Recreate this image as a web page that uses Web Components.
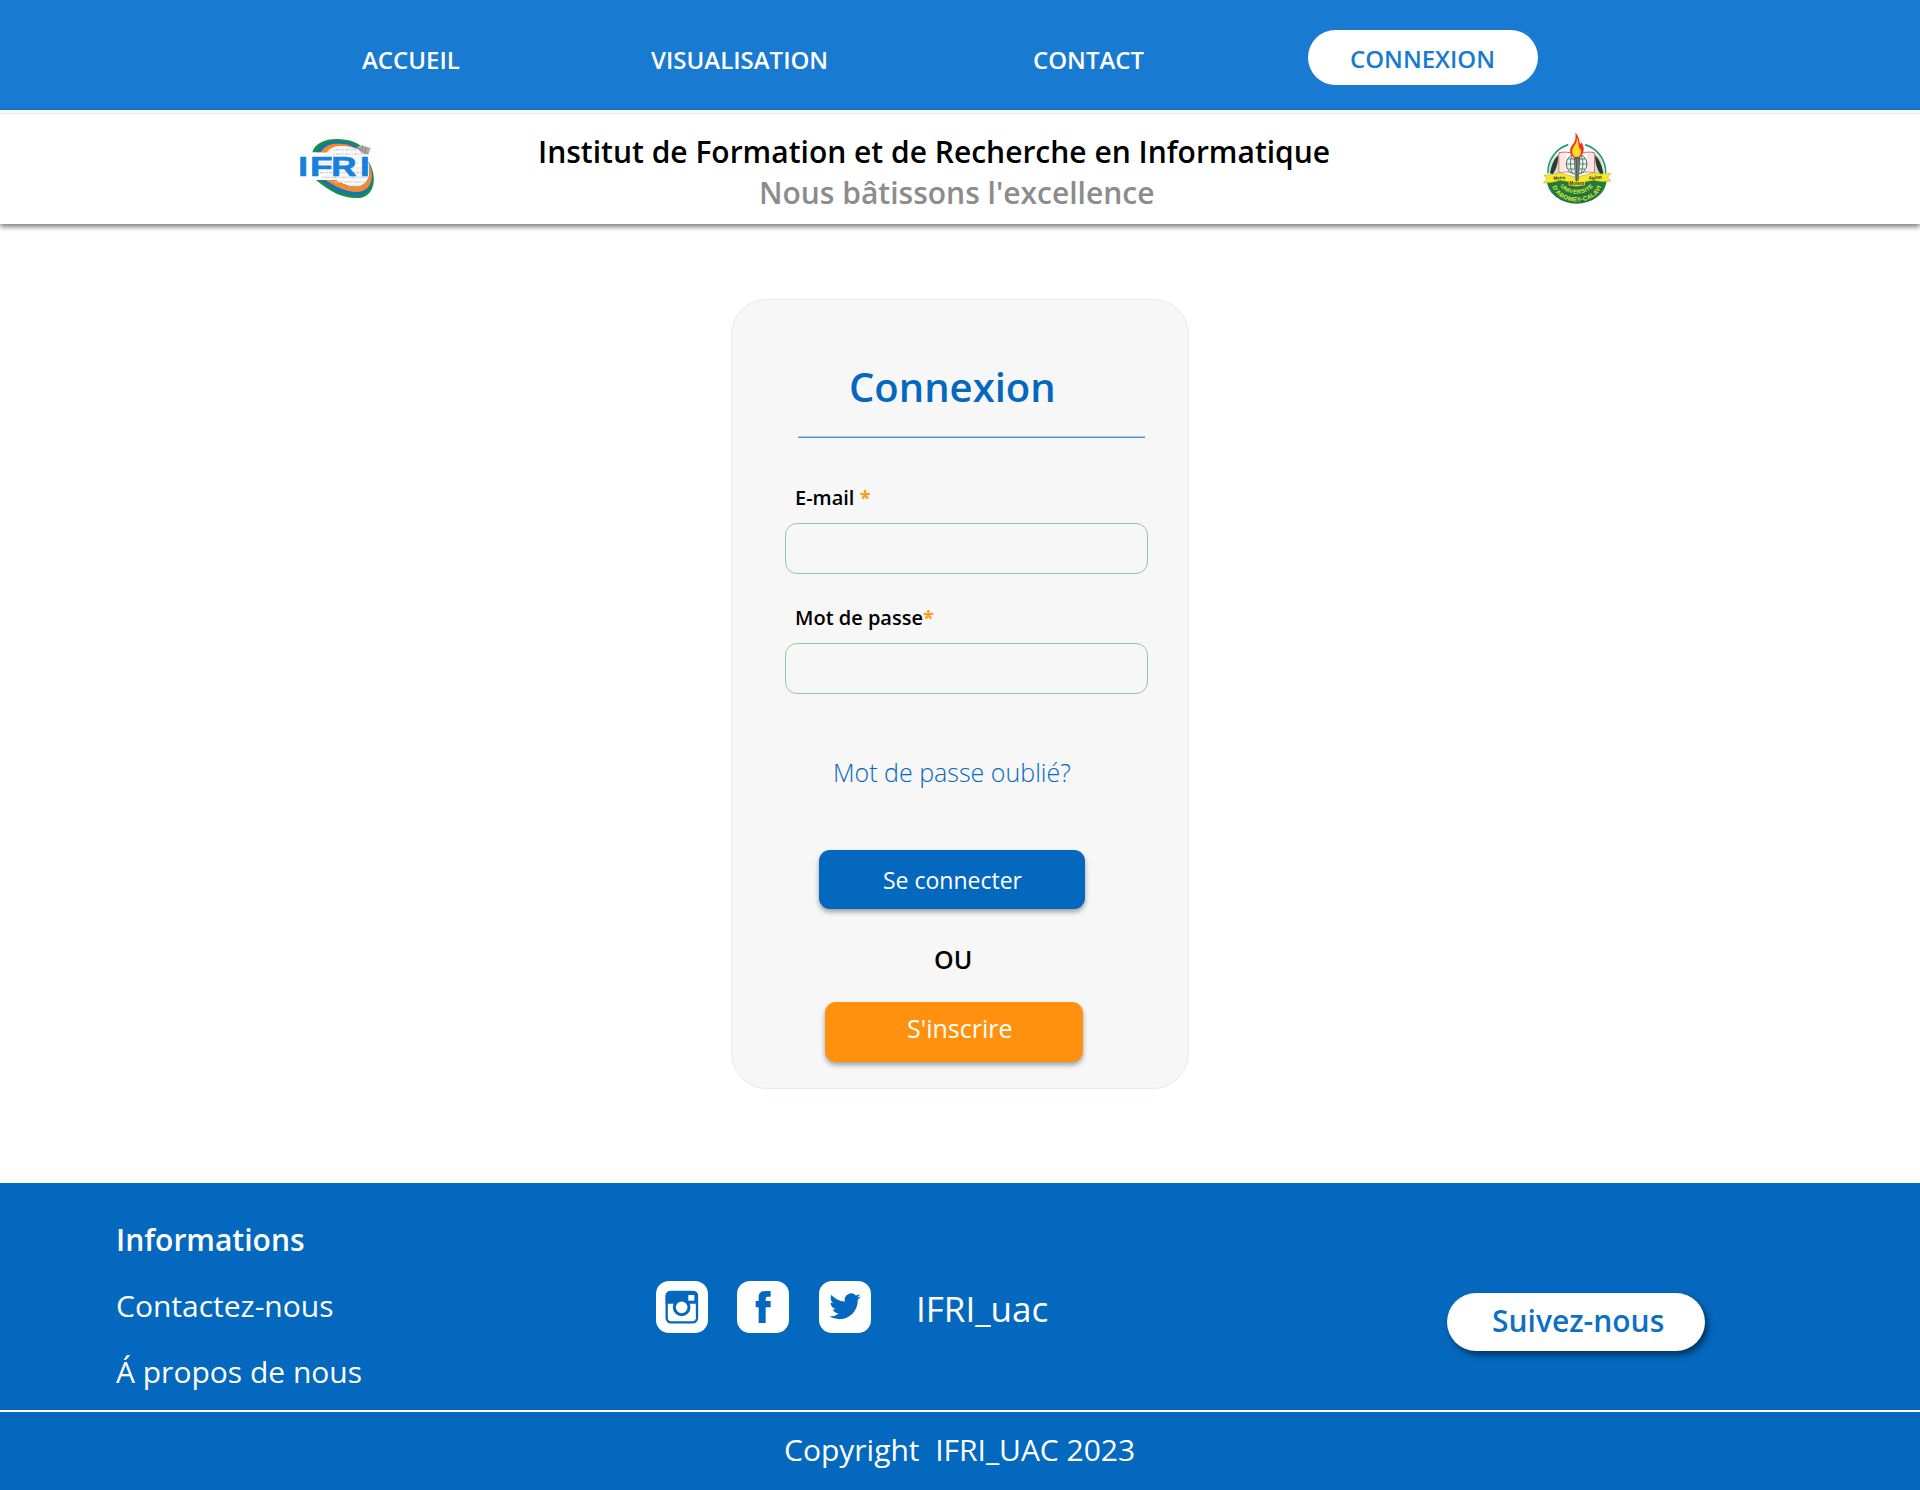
<!DOCTYPE html>
<html lang="fr">
<head>
<meta charset="utf-8">
<title>IFRI - Connexion</title>
<style>
  body { margin: 0; background: #fff; font-family: "Open Sans", sans-serif; color: #000; }
</style>
</head>
<body>
<ifri-page></ifri-page>
<script>
const define = (name, html) => {
  const template = document.createElement('template');
  template.innerHTML = html;
  customElements.define(name, class extends HTMLElement {
    constructor() {
      super();
      this.attachShadow({ mode: 'open' }).append(template.content.cloneNode(true));
    }
  });
};

define('nav-link', `
<style>
  :host { display: block; padding-top: 43px; font-weight: 600; font-size: 24px; line-height: 34px; color: #fff; white-space: nowrap; }
</style><slot></slot>`);

define('nav-pill', `
<style>
  :host { display: block; box-sizing: border-box; width: 230px; height: 55px; margin-top: 30px; padding: 12px 0 0 42px;
    border-radius: 27.5px; background: #fff; color: #187ad1; font-weight: 600; font-size: 24px; line-height: 34px; }
</style><slot></slot>`);

define('site-nav', `
<style>
  :host { display: grid; grid-template-columns: 289px 382px 275px 230px; align-items: start; box-sizing: border-box;
    height: 110px; padding-left: 362px; background: #187ad1; }
</style>
<nav-link>ACCUEIL</nav-link>
<nav-link>VISUALISATION</nav-link>
<nav-link>CONTACT</nav-link>
<nav-pill>CONNEXION</nav-pill>`);

define('ifri-logo', `
<style>
  :host { display: block; width: 120px; height: 90px; }
  svg { display: block; }
  text { font-family: "Liberation Sans", Arial, sans-serif; font-weight: bold; }
</style>
<svg width="120" height="90" viewBox="0 0 360 270">
  <path d="M97 97C105 68 140 56 172 57C205 57 232 68 246 80L225 85C205 72 185 68 168 70C140 74 124 85 118 97Z" fill="#12904a"/>
  <path d="M112 97C120 74 147 65 172 65C203 65 225 73 240 84L150 97Z" fill="#1670c4"/>
  <path d="M122 97C132 77 154 70 175 71C205 70 222 80 236 90L150 97Z" fill="#f58a2c"/>
  <path d="M140 98C150 82 170 77 190 78C240 80 272 112 277 150C281 187 262 205 238 203C198 202 170 190 138 170Z" fill="#fafafa"/>
  <path d="M266 125C296 175 281 230 237 234C187 236 150 215 108 180H165C190 193 215 204 236 199C262 194 275 170 266 125Z" fill="#12904a"/>
  <path d="M266 125C290 175 275 222 232 225C185 224 150 205 124 180H165C190 193 215 204 236 199C262 194 275 170 266 125Z" fill="#1670c4"/>
  <path d="M266 125C286 170 275 213 232 216C195 216 165 199 136 180H165C190 193 215 204 236 199C262 194 275 170 266 125Z" fill="#f58a2c"/>
  <g fill="none" stroke="#d3d4d7" stroke-width="5" stroke-dasharray="5 3 9 2 4 4">
    <path d="M160 89H228M160 102H258M112 158H262M125 172H266M165 186H258"/>
    <path d="M205 197H245" stroke-dasharray="3 3"/>
    <path d="M112 129H235M112 144H266" opacity=".6"/>
  </g>
  <path d="M228 82L244 76L272 84L265 103L246 100Z" fill="#b3a9a9"/>
  <path d="M229 82L246 91L265 103M246 91L248 77M258 81L256 99" fill="none" stroke="#8a8488" stroke-width="3"/>
  <g fill="#167fe0" stroke="#167fe0" stroke-width="2">
    <text transform="translate(55 167) scale(1.25 1)" font-size="84">I</text>
    <text transform="translate(90 167) scale(1.32 1)" font-size="84">F</text>
    <text transform="translate(154 167) scale(1.25 1)" font-size="84">R</text>
    <text transform="translate(240 167) scale(1.25 1)" font-size="84">I</text>
  </g>
</svg>`);

define('uac-logo', `
<style>
  :host { display: block; width: 120px; height: 100px; }
  svg { display: block; }
  text { font-family: "Liberation Sans", Arial, sans-serif; font-weight: bold; }
</style>
<svg width="120" height="100" viewBox="0 0 360 300">
  <path d="M84 160A87 87 0 0 1 145 74M195 74A87 87 0 0 1 257 160" fill="none" stroke="#259a76" stroke-width="5"/>
  <path d="M80 178H260A90 73 0 0 1 80 178Z" fill="#207a3e"/>
  <path d="M88 162C86 135 96 110 116 100L120 162ZM252 162C254 135 244 110 224 100L220 162Z" fill="#cfe0d2"/>
  <path d="M90 160C95 132 103 117 115 106C114 130 110 147 98 163ZM250 160C245 132 237 117 225 106C226 130 230 147 242 163Z" fill="#283c2e"/>
  <path d="M117 98C140 94 158 98 170 108C183 98 201 94 223 98V158C200 153 184 156 170 165C157 156 140 153 117 158Z" fill="#fff" stroke="#dc5a59" stroke-width="3"/>
  <path d="M119 100L140 98V154L119 157ZM221 100L201 98V154L221 157Z" fill="#fbe6e3"/>
  <circle cx="170" cy="132" r="31" fill="#eef4ef" stroke="#45705c" stroke-width="3"/>
  <path d="M140 132H200M145 117H195M145 147H195M170 101V163M158 103Q144 132 158 161M182 103Q196 132 182 161" fill="none" stroke="#45705c" stroke-width="2.5"/>
  <path d="M72 165Q96 166 119 158L168 172L220 158Q245 165 272 160L263 172L273 183Q247 188 222 181L195 185V196Q171 201 146 196V185L120 181Q98 190 70 189L81 177Z" fill="#f6e92c" stroke="#a89f26" stroke-width="1.5"/>
  <path d="M161 110H181L176 182H166Z" fill="#55615d"/>
  <path d="M166 118V180M174 118V180" stroke="#9aa9a5" stroke-width="2"/>
  <path d="M160 112C143 94 151 81 162 68C168 58 167 47 166 38C179 50 177 64 181 72L184 67C197 85 191 102 179 112Z" fill="#ee3424"/>
  <path d="M163 110C152 96 157 85 166 73C170 67 171 60 170 53C179 68 173 80 180 87C186 95 182 104 176 110Z" fill="#ffdc24"/>
  <g fill="#27301d" font-size="14" text-anchor="middle">
    <text x="118" y="178" transform="rotate(-3 118 178)">Mens</text>
    <text x="170" y="194">Molem</text>
    <text x="226" y="177" transform="rotate(-4 226 177)">Agitat</text>
  </g>
  <path id="upper" d="M120 198C140 229 200 229 222 196" fill="none"/>
  <path id="lower" d="M97 199C118 260 224 260 245 197" fill="none"/>
  <g fill="#e5eb3d">
    <text font-size="17"><textPath href="#upper" startOffset="1" textLength="112">UNIVERSITE</textPath></text>
    <text font-size="18"><textPath href="#lower" startOffset="1" textLength="182">D'ABOMEY-CALAVI</textPath></text>
  </g>
</svg>`);

define('site-banner', `
<style>
  :host { display: grid; grid-template-columns: 258px 982px 120px; align-items: start; box-sizing: border-box; position: relative;
    height: 114px; padding-left: 280px; background: #fff; border-top: 3px solid #f7f7f7;
    box-shadow: inset 0 1px #ececec, 0 3px 5px rgba(0,0,0,.5); }
  ifri-logo, uac-logo { margin-top: 7px; }
  .words { padding-top: 19px; font-size: 30px; line-height: 40px; font-weight: 600; white-space: nowrap; }
  .motto { padding: 1px 0 0 221px; color: #8c8c8c; }
</style>
<ifri-logo></ifri-logo>
<div class="words">
  <div>Institut de Formation et de Recherche en Informatique</div>
  <div class="motto">Nous bâtissons l'excellence</div>
</div>
<uac-logo></uac-logo>`);

define('form-field', `
<style>
  :host { display: block; }
  .label { padding-left: 10px; font-size: 20px; line-height: 28px; font-weight: 600; }
  ::slotted(b) { color: #fb9e17; font-weight: 700; }
  .box { box-sizing: border-box; height: 51px; margin: 11px 0 1px; border: 1px solid #8fc7a8; border-radius: 12px; }
</style>
<div class="label"><slot></slot></div>
<div class="box"></div>`);

define('action-button', `
<style>
  :host { display: block; box-sizing: border-box; border-radius: 11px; color: #fff; line-height: 34px;
    box-shadow: 0 3px 5px rgba(0,0,0,.36); white-space: nowrap; }
</style><slot></slot>`);

define('login-card', `
<style>
  :host { display: flex; flex-direction: column; box-sizing: border-box; width: 458px; height: 790px;
    padding: 60px 40px 0 53px; border: 1px solid #dfebe6; border-radius: 36px; background: #f7f7f7; }
  h1 { margin: 0; padding-left: 64px; font-size: 40px; line-height: 54px; font-weight: 600; color: #0468bf; }
  hr { width: 347px; height: 2px; margin: 22px 0 0 13px; border: 0; background: linear-gradient(#a3c8e9 50%, #4f94d0 50%); }
  .first { margin-top: 46px; }
  .second { margin-top: 28px; }
  form-field { height: 92px; }
  .forgot { margin-top: 59px; padding-left: 48px; font-size: 25px; line-height: 34px; font-weight: 300; color: #0468bf; }
  .login { width: 266px; height: 59px; margin: 61px 0 0 34px; padding: 13px 0 0 64px; background: #0468bf; font-size: 23px; }
  .or { margin-top: 33px; padding-left: 149px; font-size: 25px; line-height: 34px; font-weight: 600; }
  .join { width: 258px; height: 60px; margin: 26px 0 0 40px; padding: 9px 0 0 82px; background: #ff910f; font-size: 25px; }
</style>
<h1>Connexion</h1>
<hr>
<form-field class="first">E-mail <b>*</b></form-field>
<form-field class="second">Mot de passe<b>*</b></form-field>
<div class="forgot">Mot de passe oublié?</div>
<action-button class="login">Se connecter</action-button>
<div class="or">OU</div>
<action-button class="join">S'inscrire</action-button>`);

define('social-tile', `
<style>
  :host { display: block; width: 52px; height: 52px; border-radius: 13px; background: #fff; color: #0468bf; }
  ::slotted(svg) { display: block; }
</style><slot></slot>`);

define('site-footer', `
<style>
  :host { display: block; height: 307px; background: #0468bf; color: #fff; font-size: 30px; line-height: 40px; white-space: nowrap; }
  .main { display: grid; grid-template-columns: 540px 791px 258px; align-items: start; box-sizing: border-box; height: 227px; padding-left: 116px; }
  .links { display: flex; flex-direction: column; gap: 26px; padding-top: 37px; }
  .links b { font-weight: 600; }
  .social { display: flex; align-items: flex-start; gap: 29px; padding-top: 98px; }
  .bird { margin-left: 1px; }
  .handle { padding: 4px 0 0 16px; font-size: 35px; line-height: 48px; }
  .follow { box-sizing: border-box; width: 258px; height: 58px; margin-top: 110px; padding: 8px 0 0 45px; border-radius: 29px;
    background: #fff; color: #0f6fc6; font-weight: 600; box-shadow: 3px 4px 6px rgba(0,0,0,.5); }
  .legal { box-sizing: border-box; height: 80px; padding: 18px 0 0 784px; border-top: 2px solid #fff; white-space: pre; }
</style>
<div class="main">
  <div class="links"><b>Informations</b><span>Contactez-nous</span><span>Á propos de nous</span></div>
  <div class="social">
    <social-tile><svg width="52" height="52" viewBox="0 0 156 156">
      <rect x="32" y="33" width="91" height="91" rx="13" fill="none" stroke="currentColor" stroke-width="7"/>
      <path d="M29 68V45Q29 30 44 30H111Q126 30 126 45V68Z" fill="currentColor"/>
      <path d="M97 42H115V59H97Z" fill="#fff"/>
      <circle cx="77" cy="79" r="22" fill="#fff" stroke="currentColor" stroke-width="9"/>
    </svg></social-tile>
    <social-tile><svg width="52" height="52" viewBox="0 0 156 156">
      <path d="M65 126V79H56V60H65V50C65 35 73 30 87 30H101V47H93C87 47 86 50 86 54V60H101V79H86V126Z" fill="currentColor"/>
    </svg></social-tile>
    <social-tile class="bird"><svg width="52" height="52" viewBox="0 0 156 156">
      <g transform="translate(31 28.5) scale(3.95)"><path fill="currentColor" d="M23.95 4.57a10 10 0 0 1-2.82.77 4.96 4.96 0 0 0 2.16-2.72c-.95.55-2 .95-3.13 1.18a4.92 4.92 0 0 0-8.38 4.48C7.69 8.1 4.07 6.13 1.64 3.16a4.92 4.92 0 0 0 1.52 6.57 4.9 4.9 0 0 1-2.23-.61v.06c0 2.38 1.7 4.37 3.95 4.82a5 5 0 0 1-2.21.09 4.94 4.94 0 0 0 4.6 3.42A9.87 9.87 0 0 1 0 19.54a13.99 13.99 0 0 0 7.55 2.21c9.06 0 14.01-7.5 14.01-13.98 0-.21 0-.42-.02-.63a9.94 9.94 0 0 0 2.46-2.55z"/></g>
    </svg></social-tile>
    <div class="handle">IFRI_uac</div>
  </div>
  <div class="follow">Suivez-nous</div>
</div>
<div class="legal">Copyright  IFRI_UAC 2023</div>`);

define('ifri-page', `
<style>
  :host { display: flex; flex-direction: column; width: 1920px; height: 1490px; overflow: hidden; }
  main { display: flex; justify-content: center; align-items: flex-start; box-sizing: border-box; height: 959px; padding-top: 75px; }
</style>
<site-nav></site-nav>
<site-banner></site-banner>
<main><login-card></login-card></main>
<site-footer></site-footer>`);
</script>
</body>
</html>
